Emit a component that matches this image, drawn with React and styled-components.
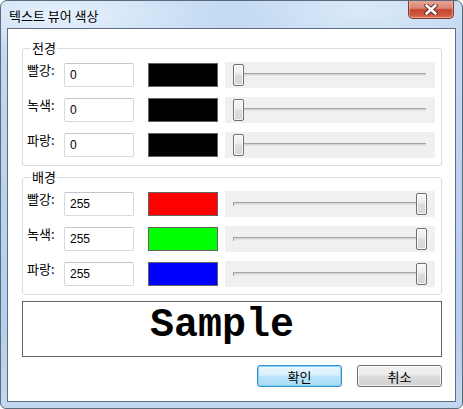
import React from "react";
import styled, { createGlobalStyle } from "styled-components";

const GlobalStyle = createGlobalStyle`
  html, body {
    margin: 0;
    padding: 0;
    background: #ffffff;
  }

  body {
    font-family: "Noto Sans CJK KR", "Noto Sans", sans-serif;
    font-size: 13px;
    color: #000;
  }
`;

const foreground = [
  { label: "빨강:", value: 0, color: "#000000" },
  { label: "녹색:", value: 0, color: "#000000" },
  { label: "파랑:", value: 0, color: "#000000" },
];

const background = [
  { label: "빨강:", value: 255, color: "#ff0000" },
  { label: "녹색:", value: 255, color: "#00ff00" },
  { label: "파랑:", value: 255, color: "#0000ff" },
];

function CloseIcon() {
  return (
    <svg width="14" height="11" viewBox="0 0 14 11">
      <path
        d="M2.5 1.5 L11.5 9.5 M11.5 1.5 L2.5 9.5"
        stroke="#5a2a24"
        strokeWidth="4.4"
        strokeLinecap="round"
        fill="none"
      />
      <path
        d="M2.5 1.5 L11.5 9.5 M11.5 1.5 L2.5 9.5"
        stroke="#ffffff"
        strokeWidth="2.6"
        strokeLinecap="round"
        fill="none"
      />
    </svg>
  );
}

function ColorGroup({ title, rows, gapAfter }) {
  return (
    <Group $gap={gapAfter}>
      <Caption>{title}</Caption>
      {rows.map((row) => (
        <Row key={row.label}>
          <Label>{row.label}</Label>
          <ValueInput readOnly value={String(row.value)} />
          <Swatch $color={row.color} />
          <Slider>
            <Track />
            <Thumb style={{ left: 8 + (row.value / 255) * 183 }} />
          </Slider>
        </Row>
      ))}
    </Group>
  );
}

function App() {
  return (
    <>
      <GlobalStyle />
      <Window>
        <TitleBar>
          <Title>텍스트 뷰어 색상</Title>
          <CloseButton>
            <CloseIcon />
          </CloseButton>
        </TitleBar>
        <Client>
          <ColorGroup title="전경" rows={foreground} gapAfter={11} />
          <ColorGroup title="배경" rows={background} gapAfter={6} />
          <SampleBox>
            <SampleText>Sample</SampleText>
          </SampleBox>
          <ButtonRow>
            <DialogButton $primary>확인</DialogButton>
            <DialogButton>취소</DialogButton>
          </ButtonRow>
        </Client>
      </Window>
    </>
  );
}

export default App;

const Window = styled.div`
  width: 463px;
  height: 409px;
  box-sizing: border-box;
  display: flex;
  flex-direction: column;
  padding: 0 6px 6px;
  border: 1px solid #5b6b7c;
  border-radius: 7px 7px 6px 6px;
  overflow: hidden;
  background:
    radial-gradient(ellipse 160px 40px at 60px 14px, rgba(235, 244, 253, 0.9), rgba(235, 244, 253, 0)),
    radial-gradient(ellipse 120px 40px at 360px 10px, rgba(225, 237, 250, 0.8), rgba(225, 237, 250, 0)),
    linear-gradient(180deg, #c4dbf3 0%, #bcd4ee 40%, #b6cfea 80%, #c3d8ee 100%);
`;

const TitleBar = styled.div`
  height: 27px;
  flex: none;
  display: flex;
  align-items: flex-start;
  justify-content: space-between;
  padding-left: 2px;
`;

const Title = styled.div`
  margin-top: 6px;
  line-height: 17px;
  font-size: 13px;
  color: #000;
`;

const CloseButton = styled.div`
  width: 46px;
  height: 19px;
  margin-top: -1px;
  margin-right: 2px;
  box-sizing: border-box;
  display: flex;
  align-items: center;
  justify-content: center;
  border: 1px solid #7a3b33;
  border-top: none;
  border-radius: 0 0 5px 5px;
  background: linear-gradient(180deg, #e9a99b 0%, #d98572 45%, #c5452f 55%, #cf5a3e 85%, #e07b5e 100%);
  box-shadow: inset 0 0 0 1px rgba(255, 210, 200, 0.45);
`;

const Client = styled.div`
  flex: 1;
  display: flex;
  flex-direction: column;
  padding: 19px 13px 14px 14px;
  background: #ffffff;
  border: 1px solid #5f6f80;
`;

const Group = styled.div`
  position: relative;
  display: flex;
  flex-direction: column;
  gap: 9px;
  padding: 13px 6px 7px 4px;
  margin-bottom: ${(p) => p.$gap}px;
  border: 1px solid #d5dfe5;
  border-radius: 3px;
`;

const Caption = styled.span`
  position: absolute;
  top: -9px;
  left: 8px;
  padding: 0 1px;
  line-height: 16px;
  font-size: 13px;
  background: #ffffff;
`;

const Row = styled.div`
  height: 26px;
  display: flex;
  align-items: center;
`;

const Label = styled.div`
  width: 37px;
  flex: none;
  align-self: flex-start;
  margin-top: -1px;
  line-height: 17px;
  font-size: 13px;
`;

const ValueInput = styled.input`
  width: 70px;
  height: 24px;
  flex: none;
  box-sizing: border-box;
  margin: 0;
  padding: 0 5px;
  border: 1px solid #d6d9de;
  border-top-color: #c3c7cd;
  border-radius: 2px;
  font-family: "Liberation Sans", Arial, sans-serif;
  font-size: 12px;
  color: #000;
  background: #ffffff;
  outline: none;
`;

const Swatch = styled.div`
  width: 70px;
  height: 24px;
  flex: none;
  box-sizing: border-box;
  margin-left: 14px;
  border: 1px solid #646464;
  background: ${(p) => p.$color};
`;

const Slider = styled.div`
  position: relative;
  width: 210px;
  height: 26px;
  flex: none;
  margin-left: 7px;
  background: #f0f0f0;
`;

const Track = styled.div`
  position: absolute;
  left: 8px;
  top: 11px;
  width: 193px;
  height: 1px;
  border-top: 1px solid #a4a4a4;
  border-bottom: 1px solid #e2e2e2;
  background: #d6d6d6;

  &::before {
    content: "";
    position: absolute;
    left: 0;
    top: -1px;
    width: 1px;
    height: 4px;
    background: #a4a4a4;
  }
`;

const Thumb = styled.div`
  position: absolute;
  top: 2px;
  width: 11px;
  height: 22px;
  box-sizing: border-box;
  border: 1px solid #707070;
  border-radius: 2px;
  background: linear-gradient(180deg, #f6f6f6 0%, #ececec 45%, #dcdcdc 50%, #d6d6d6 100%);
  box-shadow: inset 0 0 0 1px rgba(255, 255, 255, 0.8);
`;

const SampleBox = styled.div`
  height: 56px;
  box-sizing: border-box;
  display: flex;
  align-items: center;
  justify-content: center;
  padding-right: 20px;
  border: 1px solid #646464;
`;

const SampleText = styled.span`
  font-family: "Liberation Mono", "Courier New", monospace;
  font-weight: bold;
  font-size: 40px;
  line-height: 40px;
  margin-top: -6px;
`;

const ButtonRow = styled.div`
  display: flex;
  justify-content: flex-end;
  gap: 15px;
  margin-top: 8px;
`;

const DialogButton = styled.div`
  width: 85px;
  height: 22px;
  box-sizing: border-box;
  display: flex;
  align-items: center;
  justify-content: center;
  font-size: 13px;
  border-radius: 3px;
  border: 1px solid ${(p) => (p.$primary ? "#3c8fc8" : "#707070")};
  background: ${(p) =>
    p.$primary
      ? "linear-gradient(180deg, #eaf6fd 0%, #d9f0fc 45%, #bee6fd 50%, #a7d9f5 100%)"
      : "linear-gradient(180deg, #f2f2f2 0%, #ebebeb 45%, #dddddd 50%, #cfcfcf 100%)"};
  box-shadow: ${(p) =>
    p.$primary
      ? "inset 0 0 0 1px #7fd4f7"
      : "inset 0 0 0 1px rgba(255, 255, 255, 0.7)"};
`;
